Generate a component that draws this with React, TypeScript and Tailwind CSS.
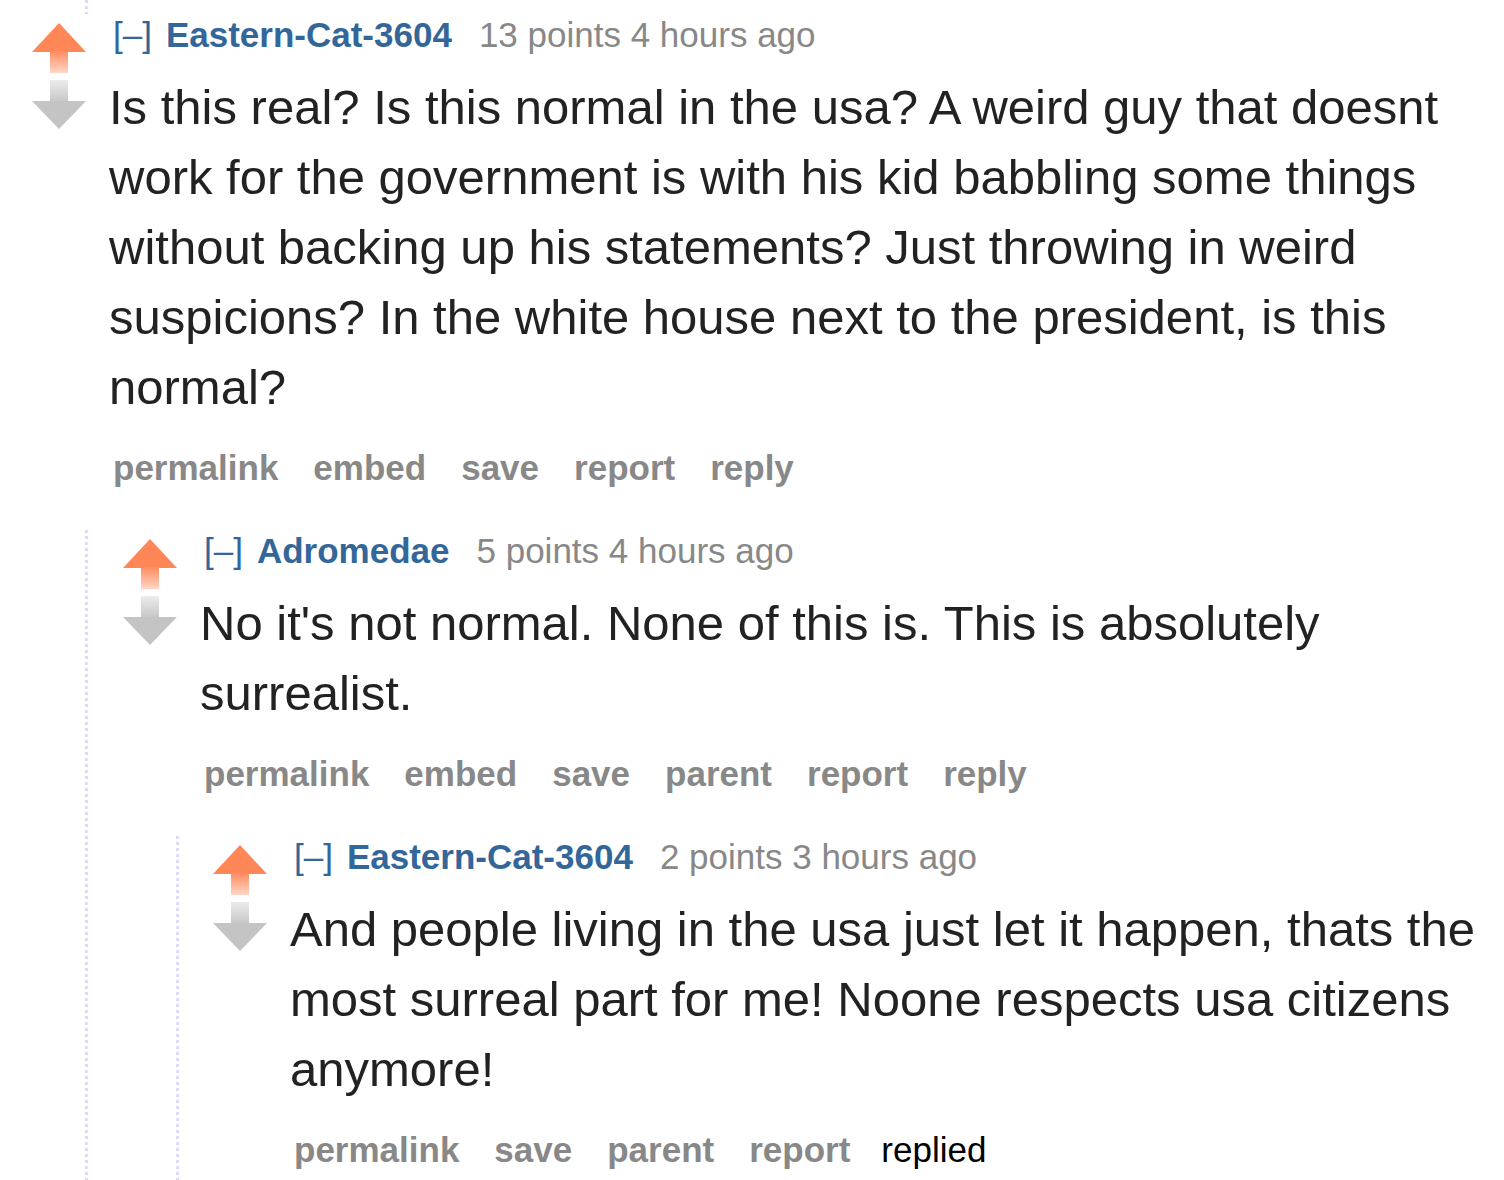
import React from 'react';

type CommentData = {
  author: string;
  points: string;
  body: string;
  buttons: string[];
  replied?: boolean;
  children?: CommentData[];
};

const thread: CommentData = {
  author: 'Eastern-Cat-3604',
  points: '13 points 4 hours ago',
  body: 'Is this real? Is this normal in the usa? A weird guy that doesnt work for the government is with his kid babbling some things without backing up his statements? Just throwing in weird suspicions? In the white house next to the president, is this normal?',
  buttons: ['permalink', 'embed', 'save', 'report', 'reply'],
  children: [
    {
      author: 'Adromedae',
      points: '5 points 4 hours ago',
      body: "No it's not normal. None of this is. This is absolutely surrealist.",
      buttons: ['permalink', 'embed', 'save', 'parent', 'report', 'reply'],
      children: [
        {
          author: 'Eastern-Cat-3604',
          points: '2 points 3 hours ago',
          body: 'And people living in the usa just let it happen, thats the most surreal part for me! Noone respects usa citizens anymore!',
          buttons: ['permalink', 'save', 'parent', 'report'],
          replied: true,
        },
      ],
    },
  ],
};

// dotted rail on the left of nested replies
const Rail = () => (
  <div className="w-[3px] shrink-0 self-stretch bg-[linear-gradient(to_bottom,#dcdcfa_50%,transparent_50%)] bg-[length:3px_6px]" />
);

const VoteArrows = ({ id }: { id: string }) => (
  <div className="flex w-[54px] shrink-0 flex-col gap-[7px] pt-[9px]">
    <svg width="54" height="50" viewBox="0 0 54 50">
      <defs>
        <linearGradient id={`up-${id}`} x1="0" y1="0" x2="0" y2="1">
          <stop offset="0" stopColor="#ff8b60" />
          <stop offset="1" stopColor="#ffd6c6" />
        </linearGradient>
      </defs>
      <polygon points="27,0 54,29 0,29" fill="#ff8656" />
      <rect x="18" y="28" width="18" height="22" fill={`url(#up-${id})`} />
    </svg>
    <svg width="54" height="49" viewBox="0 0 54 49">
      <defs>
        <linearGradient id={`down-${id}`} x1="0" y1="0" x2="0" y2="1">
          <stop offset="0" stopColor="#ececec" />
          <stop offset="1" stopColor="#c6c6c6" />
        </linearGradient>
      </defs>
      <rect x="18" y="0" width="18" height="22" fill={`url(#down-${id})`} />
      <polygon points="0,21 54,21 27,49" fill="#c4c4c4" />
    </svg>
  </div>
);

const Comment = ({ c, level }: { c: CommentData; level: number }) => {
  const arrowMl = level === 0 ? 'ml-[32px]' : level === 1 ? 'ml-[35px]' : 'ml-[34px]';
  const childMl = level === 0 ? 'ml-[85px]' : 'ml-[88px]';
  return (
    <div className="flex flex-col">
      <div className={`flex ${arrowMl}`}>
        <VoteArrows id={`c${level}`} />
        <div className="ml-[23px] min-w-0 flex-1">
          {/* tagline */}
          <div className="mt-[1px] flex h-[40px] items-baseline pl-[4px] text-[35px] leading-[40px] whitespace-nowrap">
            <span className="text-[#369]">[–]</span>
            <span className="ml-[14px] font-bold text-[#369]">{c.author}</span>
            <span className="ml-[27px] text-[#888]">{c.points}</span>
          </div>
          <p className="mt-[17px] text-[49px] leading-[70px] text-[#222]">{c.body}</p>
          <ul className="mt-[26px] flex h-[40px] items-baseline gap-[35px] pl-[4px] text-[35px] leading-[40px]">
            {c.buttons.map((b) => (
              <li key={b} className="font-bold text-[#888]">
                {b}
              </li>
            ))}
            {c.replied && <li className="-ml-[4px] text-black">replied</li>}
          </ul>
        </div>
      </div>
      {c.children && (
        <div className={`mt-[42px] flex ${childMl}`}>
          <Rail />
          <div className="min-w-0 flex-1 pb-[20px]">
            {c.children.map((ch, i) => (
              <Comment key={i} c={ch} level={level + 1} />
            ))}
          </div>
        </div>
      )}
    </div>
  );
};

export default function App() {
  return (
    <div className="h-[1180px] w-[1504px] overflow-hidden bg-white font-['Liberation_Sans',Arial,sans-serif]">
      <div className="flex h-[14px] pl-[85px]">
        <Rail />
      </div>
      <Comment c={thread} level={0} />
    </div>
  );
}
